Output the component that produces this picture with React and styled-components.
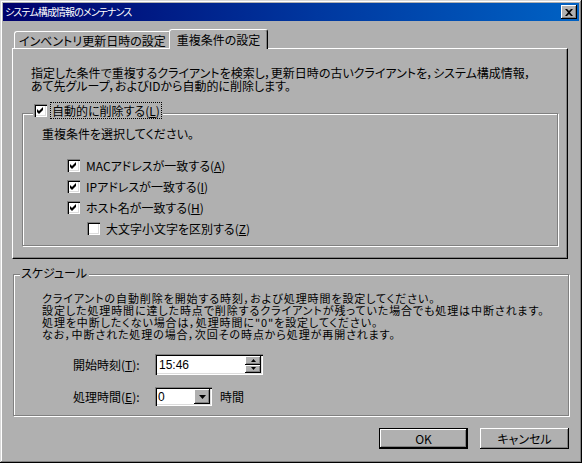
import React from 'react';
import styled, { createGlobalStyle } from 'styled-components';

const FACE = '#b0b0b0';

const GlobalStyle = createGlobalStyle`
  html, body {
    margin: 0;
    padding: 0;
    background: ${FACE};
  }
  body {
    font-family: "Noto Sans CJK JP", "Liberation Sans", sans-serif;
    font-size: 12px;
    color: #000;
  }
  * {
    box-sizing: border-box;
  }
`;

const Window = styled.div`
  width: 582px;
  height: 463px;
  background: ${FACE};
  padding: 3px;
  display: flex;
  flex-direction: column;
  box-shadow: inset -1px -1px #000, inset 1px 1px #d8d8d8, inset -2px -2px #808080, inset 2px 2px #fff;
`;

const TitleBar = styled.div`
  height: 18px;
  display: flex;
  align-items: center;
  justify-content: space-between;
  padding: 0 2px 0 2px;
  background: linear-gradient(90deg, #00006c 0%, #0038a0 55%, #0062c4 100%);
`;

const TitleText = styled.span`
  color: #fff;
  font-size: 10px;
  line-height: 18px;
  letter-spacing: -0.9px;
  font-feature-settings: "palt";
`;

const CloseButton = styled.div`
  width: 16px;
  height: 14px;
  background: ${FACE};
  display: flex;
  align-items: center;
  justify-content: center;
  box-shadow: inset -1px -1px #000, inset 1px 1px #fff, inset -2px -2px #808080;
`;

const Body = styled.div`
  flex: 1;
  display: flex;
  flex-direction: column;
  padding: 8px 11px 0 9px;
`;

const TabRow = styled.div`
  height: 19px;
  display: flex;
  align-items: flex-end;
  padding-left: 2px;
`;

const Tab = styled.div`
  height: ${(p) => (p.$active ? '20px' : '17px')};
  margin: ${(p) => (p.$active ? '0 -2px -1px -2px' : '0')};
  padding: ${(p) => (p.$active ? '0 7px 1px' : '0 4px')};
  background: ${FACE};
  border-top: 1px solid #fff;
  border-left: 1px solid #fff;
  border-right: 1px solid #000;
  border-radius: 3px 3px 0 0;
  box-shadow: inset -1px 0 #808080;
  position: relative;
  z-index: ${(p) => (p.$active ? 2 : 1)};
  display: flex;
  align-items: center;
  font-feature-settings: "palt";
  white-space: nowrap;
`;

const Sheet = styled.div`
  width: 556px;
  height: 211px;
  background: ${FACE};
  border-top: 1px solid #fff;
  border-left: 1px solid #fff;
  border-right: 1px solid #000;
  border-bottom: 1px solid #000;
  box-shadow: inset -1px -1px #808080;
  padding: 17px 9px 0 9px;
  display: flex;
  flex-direction: column;
`;

const Paragraph = styled.p`
  margin: ${(p) => p.$margin || '0'};
  line-height: 13px;
  font-feature-settings: "palt";
  white-space: nowrap;
`;

const NoteBlock = styled.div`
  margin: 12px 0 0 28px;
  display: flex;
  flex-direction: column;
`;

const NoteLine = styled.div`
  height: 12px;
  font-size: 11px;
  line-height: 12px;
  letter-spacing: 0.9px;
  font-feature-settings: "palt";
  white-space: nowrap;
`;

const GroupBox = styled.div`
  display: flex;
  flex-direction: column;
  border: 1px solid #808080;
  box-shadow: inset 1px 1px #fff, 1px 1px #fff;
  margin: ${(p) => p.$margin || '0'};
  padding-bottom: 9px;
  width: ${(p) => p.$width || 'auto'};
  align-self: ${(p) => (p.$width ? 'flex-start' : 'stretch')};
`;

const Legend = styled.div`
  align-self: flex-start;
  display: flex;
  align-items: center;
  gap: 4px;
  background: ${FACE};
  line-height: 14px;
  margin: ${(p) => p.$margin || '0'};
  padding: 0 2px 0 1px;
  font-feature-settings: "palt";
`;

const FocusLabel = styled.span`
  outline: 1px dotted #000;
  outline-offset: 0;
  padding: 0 1px;
  line-height: 15px;
`;

const Box = styled.span`
  width: 13px;
  height: 13px;
  flex: none;
  background: #fff;
  display: inline-flex;
  box-shadow: inset 1px 1px #808080, inset 2px 2px #000, inset -1px -1px #fff, inset -2px -2px #dcdcdc;
`;

const OptionList = styled.div`
  display: grid;
  row-gap: 5px;
  margin: 17px 0 0 44px;
`;

const OptionRow = styled.div`
  height: 16px;
  display: flex;
  align-items: center;
  gap: 6px;
  margin-left: ${(p) => p.$indent || 0}px;
  font-feature-settings: "palt";
`;

const Form = styled.div`
  display: grid;
  grid-template-columns: 82px auto;
  row-gap: 12px;
  align-items: center;
  margin: 14px 0 0 59px;
`;

const FieldLabel = styled.span`
  font-feature-settings: "palt";
`;

const Sunken = styled.div`
  width: ${(p) => p.$width}px;
  height: ${(p) => p.$height}px;
  background: #fff;
  display: flex;
  align-items: stretch;
  padding: 2px;
  box-shadow: inset 1px 1px #808080, inset 2px 2px #000, inset -1px -1px #fff, inset -2px -2px #dcdcdc;
`;

const FieldValue = styled.span`
  flex: 1;
  display: flex;
  align-items: center;
  padding-left: ${(p) => p.$pad || 1}px;
  font-family: "Liberation Sans", sans-serif;
  font-size: 12px;
`;

const SpinColumn = styled.div`
  width: 16px;
  display: flex;
  flex-direction: column;
`;

const SpinButton = styled.div`
  flex: 1;
  background: ${FACE};
  display: flex;
  align-items: center;
  justify-content: center;
  box-shadow: inset -1px -1px #000, inset 1px 1px #fff, inset -2px -2px #808080;
`;

const DropButton = styled(SpinButton)`
  flex: none;
  width: 16px;
`;

const ComboRow = styled.div`
  display: flex;
  align-items: center;
  gap: 8px;
`;

const ButtonRow = styled.div`
  display: flex;
  justify-content: flex-end;
  gap: 12px;
  margin-top: 12px;
  margin-right: -1px;
`;

const Button = styled.div`
  width: 89px;
  height: 21px;
  background: ${FACE};
  display: flex;
  align-items: center;
  justify-content: center;
  font-feature-settings: "palt";
  box-shadow: ${(p) =>
    p.$default
      ? 'inset 0 0 0 1px #000, inset -2px -2px #000, inset 2px 2px #fff, inset -3px -3px #808080'
      : 'inset -1px -1px #000, inset 1px 1px #fff, inset -2px -2px #808080'};
`;

const Check = () => (
  <svg width="13" height="13" viewBox="0 0 13 13">
    <polygon points="3,5 5,7 9,3 9,6 5,10 3,8" fill="#000" />
  </svg>
);

const CheckBox = ({ checked }) => <Box>{checked && <Check />}</Box>;

const Key = ({ k }) => (
  <>
    (<u>{k}</u>)
  </>
);

const notes = [
  'クライアントの自動削除を開始する時刻，および処理時間を設定してください。',
  '設定した処理時間に達した時点で削除するクライアントが残っていた場合でも処理は中断されます。',
  '処理を中断したくない場合は，処理時間に"0"を設定してください。',
  'なお，中断された処理の場合，次回その時点から処理が再開されます。',
];

export default function App() {
  return (
    <>
      <GlobalStyle />
      <Window>
        <TitleBar>
          <TitleText>システム構成情報のメンテナンス</TitleText>
          <CloseButton>
            <svg width="8" height="7" viewBox="0 0 8 7">
              <path d="M0 0h2l2 2 2-2h2L5 3.5 8 7H6L4 5 2 7H0l3-3.5z" fill="#000" />
            </svg>
          </CloseButton>
        </TitleBar>

        <Body>
          <TabRow>
            <Tab>インベントリ更新日時の設定</Tab>
            <Tab $active>重複条件の設定</Tab>
          </TabRow>

          <Sheet>
            <Paragraph $margin="0 0 0 9px">
              指定した条件で重複するクライアントを検索し，更新日時の古いクライアントを，システム構成情報，
              <br />
              あて先グループ，およびIDから自動的に削除します。
            </Paragraph>

            <GroupBox $margin="21px 0 0 0">
              <Legend $margin="-11px 0 0 10px">
                <CheckBox checked />
                <FocusLabel>
                  自動的に削除する<Key k="L" />
                </FocusLabel>
              </Legend>
              <Paragraph $margin="9px 0 0 19px">重複条件を選択してください。</Paragraph>
              <OptionList>
                <OptionRow>
                  <CheckBox checked />
                  <span>
                    MACアドレスが一致する<Key k="A" />
                  </span>
                </OptionRow>
                <OptionRow>
                  <CheckBox checked />
                  <span>
                    IPアドレスが一致する<Key k="I" />
                  </span>
                </OptionRow>
                <OptionRow>
                  <CheckBox checked />
                  <span>
                    ホスト名が一致する<Key k="H" />
                  </span>
                </OptionRow>
                <OptionRow $indent={20}>
                  <CheckBox />
                  <span>
                    大文字小文字を区別する<Key k="Z" />
                  </span>
                </OptionRow>
              </OptionList>
            </GroupBox>
          </Sheet>

          <GroupBox $margin="15px 0 0 1px" $width="556px">
            <Legend $margin="-9px 0 0 6px">スケジュール</Legend>
            <NoteBlock>
              {notes.map((line) => (
                <NoteLine key={line}>{line}</NoteLine>
              ))}
            </NoteBlock>
            <Form>
              <FieldLabel>
                開始時刻<Key k="T" />:
              </FieldLabel>
              <Sunken $width={108} $height={21}>
                <FieldValue $pad={2}>15:46</FieldValue>
                <SpinColumn>
                  <SpinButton>
                    <svg width="5" height="3" viewBox="0 0 5 3">
                      <path d="M2.5 0L5 3H0z" fill="#000" />
                    </svg>
                  </SpinButton>
                  <SpinButton>
                    <svg width="5" height="3" viewBox="0 0 5 3">
                      <path d="M0 0h5L2.5 3z" fill="#000" />
                    </svg>
                  </SpinButton>
                </SpinColumn>
              </Sunken>
              <FieldLabel>
                処理時間<Key k="E" />:
              </FieldLabel>
              <ComboRow>
                <Sunken $width={57} $height={19}>
                  <FieldValue>0</FieldValue>
                  <DropButton>
                    <svg width="7" height="4" viewBox="0 0 7 4">
                      <path d="M0 0h7L3.5 4z" fill="#000" />
                    </svg>
                  </DropButton>
                </Sunken>
                <FieldLabel>時間</FieldLabel>
              </ComboRow>
            </Form>
          </GroupBox>

          <ButtonRow>
            <Button $default>OK</Button>
            <Button>キャンセル</Button>
          </ButtonRow>
        </Body>
      </Window>
    </>
  );
}
